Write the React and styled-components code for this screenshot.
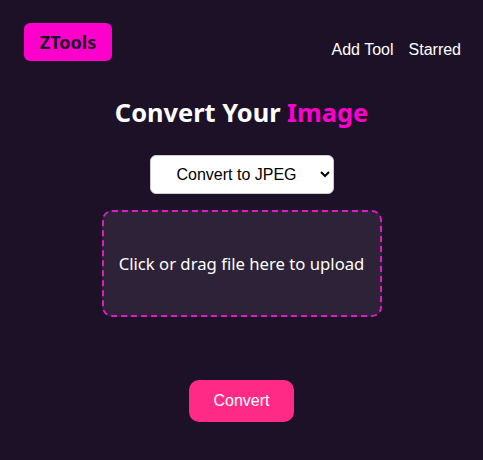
import React from "react";
import styled, { createGlobalStyle } from "styled-components";

const Global = createGlobalStyle`
  html, body { margin: 0; padding: 0; background: #1d1128; }
  body { font-family: "Liberation Sans", Arial, sans-serif; color: #fff; }
  * { box-sizing: border-box; }
`;

const Page = styled.div`
  min-height: 460px;
  background: #1d1128;
  display: flex;
  flex-direction: column;
`;

const Header = styled.header`
  display: flex;
  justify-content: space-between;
  align-items: flex-start;
  padding: 23px 22px 0 24px;
`;

const Logo = styled.div`
  width: 88px;
  height: 38px;
  background: #ff00cc;
  border-radius: 6px;
  display: flex;
  align-items: center;
  justify-content: center;
  font-family: "Noto Sans", "Open Sans", sans-serif;
  font-weight: 700;
  font-size: 18px;
  color: #1d1128;
`;

const Nav = styled.nav`
  display: flex;
  gap: 15px;
  padding-top: 18px;
`;

const NavLink = styled.a`
  color: #fff;
  font-size: 16px;
  line-height: 18px;
  text-decoration: none;
`;

const Main = styled.main`
  display: flex;
  flex-direction: column;
  align-items: center;
`;

const Title = styled.h1`
  margin: 35px 0 0;
  font-family: "Noto Sans", "Open Sans", sans-serif;
  font-size: 25.4px;
  line-height: 32px;
  font-weight: 700;
  color: #fff;
`;

const Accent = styled.span`
  color: #ff00cc;
`;

const Select = styled.select`
  margin-top: 27px;
  width: 184px;
  height: 39px;
  border-radius: 6px;
  border: 1px solid #ccc;
  background: #fff;
  color: #000;
  font-family: "Liberation Sans", Arial, sans-serif;
  font-size: 16px;
  padding: 0 8px 0 22px;
`;

const Drop = styled.div`
  margin-top: 16px;
  width: 280px;
  height: 107px;
  border: 2px dashed #e01cc0;
  border-radius: 10px;
  background: #2e2238;
  display: flex;
  align-items: center;
  justify-content: center;
  font-family: "Noto Sans", "Open Sans", sans-serif;
  font-size: 16.7px;
  color: #fff;
`;

const Button = styled.button`
  margin-top: 63px;
  width: 105px;
  height: 42px;
  border: none;
  border-radius: 10px;
  background: #ff2a85;
  color: #fff;
  font-family: "Liberation Sans", Arial, sans-serif;
  font-size: 16px;
`;

export default function App() {
  return (
    <Page>
      <Global />
      <Header>
        <Logo>ZTools</Logo>
        <Nav>
          <NavLink href="#">Add Tool</NavLink>
          <NavLink href="#">Starred</NavLink>
        </Nav>
      </Header>
      <Main>
        <Title>
          Convert Your <Accent>Image</Accent>
        </Title>
        <Select defaultValue="jpeg">
          <option value="jpeg">Convert to JPEG</option>
          <option value="png">Convert to PNG</option>
        </Select>
        <Drop>Click or drag file here to upload</Drop>
        <Button>Convert</Button>
      </Main>
    </Page>
  );
}
